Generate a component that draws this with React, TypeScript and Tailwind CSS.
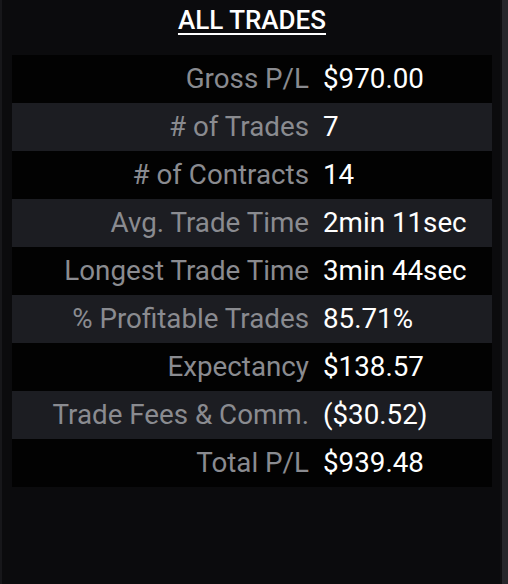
import React from "react";

const rows: [string, string][] = [
  ["Gross P/L", "$970.00"],
  ["# of Trades", "7"],
  ["# of Contracts", "14"],
  ["Avg. Trade Time", "2min 11sec"],
  ["Longest Trade Time", "3min 44sec"],
  ["% Profitable Trades", "85.71%"],
  ["Expectancy", "$138.57"],
  ["Trade Fees & Comm.", "($30.52)"],
  ["Total P/L", "$939.48"],
];

export default function App() {
  return (
    <div
      className="w-[508px] h-[584px] bg-[#0b0b0d] flex"
      style={{ fontFamily: "Roboto, 'Liberation Sans', sans-serif" }}
    >
      <div className="w-[2px] bg-[#17171a]" />
      <div className="flex-1 flex flex-col">
        <div className="h-[55px] flex justify-center pt-[4px] pl-[2px]">
          <span className="text-[26px] font-medium text-white underline underline-offset-[4px] decoration-[2px] leading-[32px]">
            ALL TRADES
          </span>
        </div>
        <div className="ml-[10px] mr-[8px] flex flex-col">
          {rows.map(([label, value], i) => (
            <div
              key={label}
              className={`h-[48px] flex items-center text-[27.75px] ${i % 2 === 1 ? "bg-[#1c1d22]" : "bg-[#020202]"}`}
            >
              <div className="w-[297px] text-right text-[#8a8b90]">{label}</div>
              <div className="pl-[14px] text-white">{value}</div>
            </div>
          ))}
        </div>
      </div>
      <div className="w-[2px] bg-[#0f0f11]" />
      <div className="w-[6px] bg-[#27272b]" />
    </div>
  );
}
